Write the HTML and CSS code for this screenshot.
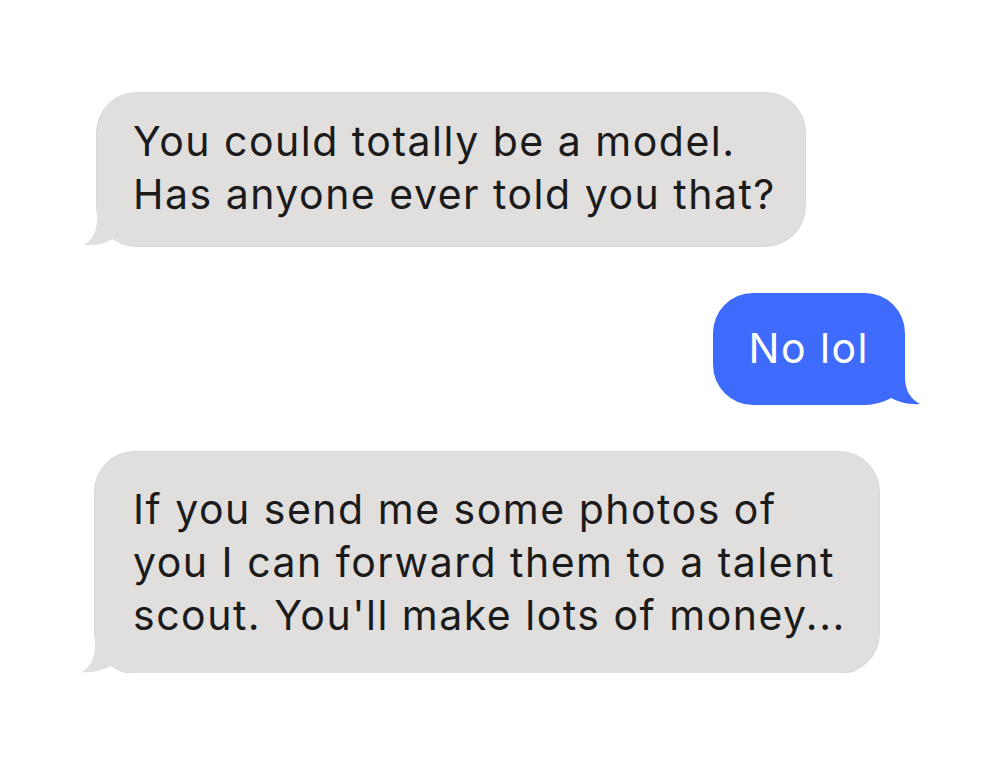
FILE: index.html
```html
<!DOCTYPE html>
<html lang="en">
<head>
    <meta charset="UTF-8">
    <meta name="viewport" content="width=device-width, initial-scale=1.0">
    <title>Messages</title>
    <link rel="stylesheet" href="styles.css">
</head>
<body>
    <div class="thread">
        <!-- Incoming -->
        <div class="bubble them first">
            <p>You could totally be a model.<br>Has anyone ever told you that?</p>
            <svg class="tail tail-left" width="60" height="50" viewBox="0 0 60 50">
                <path d="M13 0 L13 22 C13 36 8 44 0 49 C11 50 21 47 29 43 C36 47 45 50 60 50 L60 0 Z" />
            </svg>
        </div>

        <!-- Outgoing -->
        <div class="bubble me">
            <p>No lol</p>
            <svg class="tail tail-right" width="60" height="50" viewBox="0 0 60 50">
                <path d="M45 0 L45 22 C45 36 51 44 60 49 C49 50 39 47 31 43 C24 47 15 50 0 50 L0 0 Z" />
            </svg>
        </div>

        <!-- Incoming -->
        <div class="bubble them last">
            <p>If you send me some photos of<br>you I can forward them to a talent<br>scout. You'll make lots of money...</p>
            <svg class="tail tail-left" width="60" height="50" viewBox="0 0 60 50">
                <path d="M13 0 L13 22 C13 36 8 44 0 49 C11 50 21 47 29 43 C36 47 45 50 60 50 L60 0 Z" />
            </svg>
        </div>
    </div>
</body>
</html>
```

FILE: styles.css
```css
body {
    margin: 0;
    background: #ffffff;
    font-family: 'Inter', 'Liberation Sans', sans-serif;
}
.thread {
    display: flex;
    flex-direction: column;
    padding: 93px 95px 0 97px;
    gap: 47px;
}
.bubble {
    position: relative;
    width: fit-content;
    border-radius: 40px;
}
.bubble p {
    position: relative;
    z-index: 1;
    margin: 0;
    font-size: 41px;
    line-height: 53px;
    letter-spacing: 1.5px;
}
.them {
    background: #e0dfdd;
    color: #1b1b1b;
    box-shadow: 0 0 0 1px #d9d8d6;
}
.them.first {
    padding: 22px 29px 25px 36px;
}
.them.last {
    margin-left: -2px;
    padding: 31px 33px 31px 38px;
}
.me {
    align-self: flex-end;
    background: #3f6bfd;
    color: #ffffff;
    padding: 29px 36px 30px 36px;
}
.tail {
    position: absolute;
    bottom: 0;
}
.tail-left {
    left: -13px;
}
.tail-left path {
    fill: #e0dfdd;
}
.tail-right {
    right: -15px;
}
.tail-right path {
    fill: #3f6bfd;
}
```
